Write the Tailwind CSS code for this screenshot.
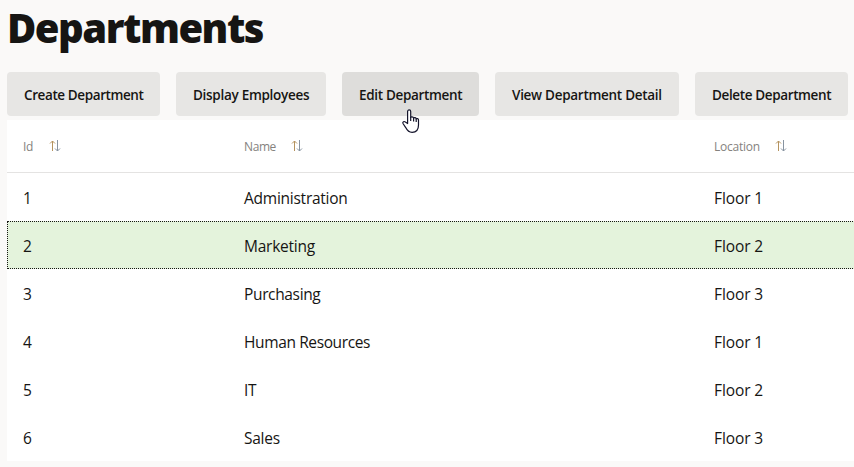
<!DOCTYPE html>
<html lang="en">
<head>
<meta charset="utf-8">
<title>Departments</title>
<script src="https://cdn.jsdelivr.net/npm/@tailwindcss/browser@4"></script>
</head>
<body class="h-[467px] w-[854px] overflow-hidden bg-[#faf9f8] pl-[7px] font-['Open_Sans','Noto_Sans',sans-serif] text-[#161513]">
<h1 class="h-[72px] whitespace-nowrap pt-[2px] text-[40px] leading-[52px] font-extrabold tracking-[-1.5px]"><span>Departments</span></h1>
<div class="flex h-12 w-[860px] gap-4 text-[13.5px] leading-[46px] font-semibold tracking-[-0.4px] whitespace-nowrap">
  <button class="h-11 w-[153px] shrink-0 rounded bg-[#e7e6e4] pl-[17px] text-left"><span>Create Department</span></button>
  <button class="h-11 w-[150px] shrink-0 rounded bg-[#e7e6e4] pl-[17px] text-left"><span class="tracking-[-0.29px]">Display Employees</span></button>
  <button class="relative h-11 w-[137px] shrink-0 rounded bg-[#dedddb] pl-[17px] text-left"><span class="tracking-[-0.33px]">Edit Department</span>
    <svg class="absolute top-[37px] left-[59px] h-6 w-[19px]" viewBox="0 0 19 24" fill="#fff" stroke="#14142b" stroke-width="1.2" stroke-linejoin="round"><path d="M6.6 14.5V2.6c0-2.3 3.1-2.3 3.1 0v6c0-1 2.7-1 2.9.5 .5-.8 2.4-.5 2.6.7 .6-.6 2.3-.2 2.3 1.2v5c0 4.5-2.4 7.3-6.4 7.3-3.4 0-4.9-1.7-6.2-4.5L2 14.5c-.8-1.8 1.2-2.6 2.4-1.4z"/><path fill="none" d="M9.7 8v4M12.6 9v3.5M15.2 10v3"/></svg>
  </button>
  <button class="h-11 w-[184px] shrink-0 rounded bg-[#e7e6e4] pl-[17px] text-left"><span class="tracking-[-0.28px]">View Department Detail</span></button>
  <button class="h-11 w-[153px] shrink-0 rounded bg-[#e7e6e4] pl-[17px] text-left"><span class="tracking-[-0.37px]">Delete Department</span></button>
</div>
<div class="h-[341px] w-[860px] bg-white text-[15.5px] tracking-[-0.25px] whitespace-nowrap">
  <div class="grid h-[53px] grid-cols-[221px_470px_1fr] items-center border-b border-[#e4e3e2] pt-[2px] pl-4 text-[12px] text-[#85827e]">
    <div class="flex items-center"><span class="w-[27px]">Id</span><svg class="-mt-[2px] -ml-px h-3 w-3" viewBox="0 0 12 12" fill="none"><path stroke="#b5935f" d="M3.5 11V1M1 3.5 3.5 1 6 3.5"/><path stroke="#8793a0" d="M8.5 0v11M6 8.5 8.5 11 11 8.5"/></svg></div>
    <div class="flex items-center"><span class="w-[48px] tracking-[-0.4px]">Name</span><svg class="-mt-[2px] -ml-px h-3 w-3" viewBox="0 0 12 12" fill="none"><path stroke="#b5935f" d="M3.5 11V1M1 3.5 3.5 1 6 3.5"/><path stroke="#8793a0" d="M8.5 0v11M6 8.5 8.5 11 11 8.5"/></svg></div>
    <div class="flex items-center"><span class="w-[62px]">Location</span><svg class="-mt-[2px] -ml-px h-3 w-3" viewBox="0 0 12 12" fill="none"><path stroke="#b5935f" d="M3.5 11V1M1 3.5 3.5 1 6 3.5"/><path stroke="#8793a0" d="M8.5 0v11M6 8.5 8.5 11 11 8.5"/></svg></div>
  </div>
  <div class="grid h-12 grid-cols-[221px_470px_1fr] items-center pt-1 pl-4"><span>1</span><span>Administration</span><span class="tracking-[-0.1px]">Floor 1</span></div>
  <div class="grid h-12 grid-cols-[221px_470px_1fr] items-center border border-dotted border-[#161513] bg-[#e4f3dc] pt-1 pl-[15px]"><span>2</span><span>Marketing</span><span class="tracking-[-0.1px]">Floor 2</span></div>
  <div class="grid h-12 grid-cols-[221px_470px_1fr] items-center pt-1 pl-4"><span>3</span><span class="tracking-[-0.35px]">Purchasing</span><span class="tracking-[-0.1px]">Floor 3</span></div>
  <div class="grid h-12 grid-cols-[221px_470px_1fr] items-center pt-1 pl-4"><span>4</span><span class="tracking-[-0.38px]">Human Resources</span><span class="tracking-[-0.1px]">Floor 1</span></div>
  <div class="grid h-12 grid-cols-[221px_470px_1fr] items-center pt-1 pl-4"><span>5</span><span>IT</span><span class="tracking-[-0.1px]">Floor 2</span></div>
  <div class="grid h-12 grid-cols-[221px_470px_1fr] items-center pt-1 pl-4"><span>6</span><span>Sales</span><span class="tracking-[-0.1px]">Floor 3</span></div>
</div>
</body>
</html>
